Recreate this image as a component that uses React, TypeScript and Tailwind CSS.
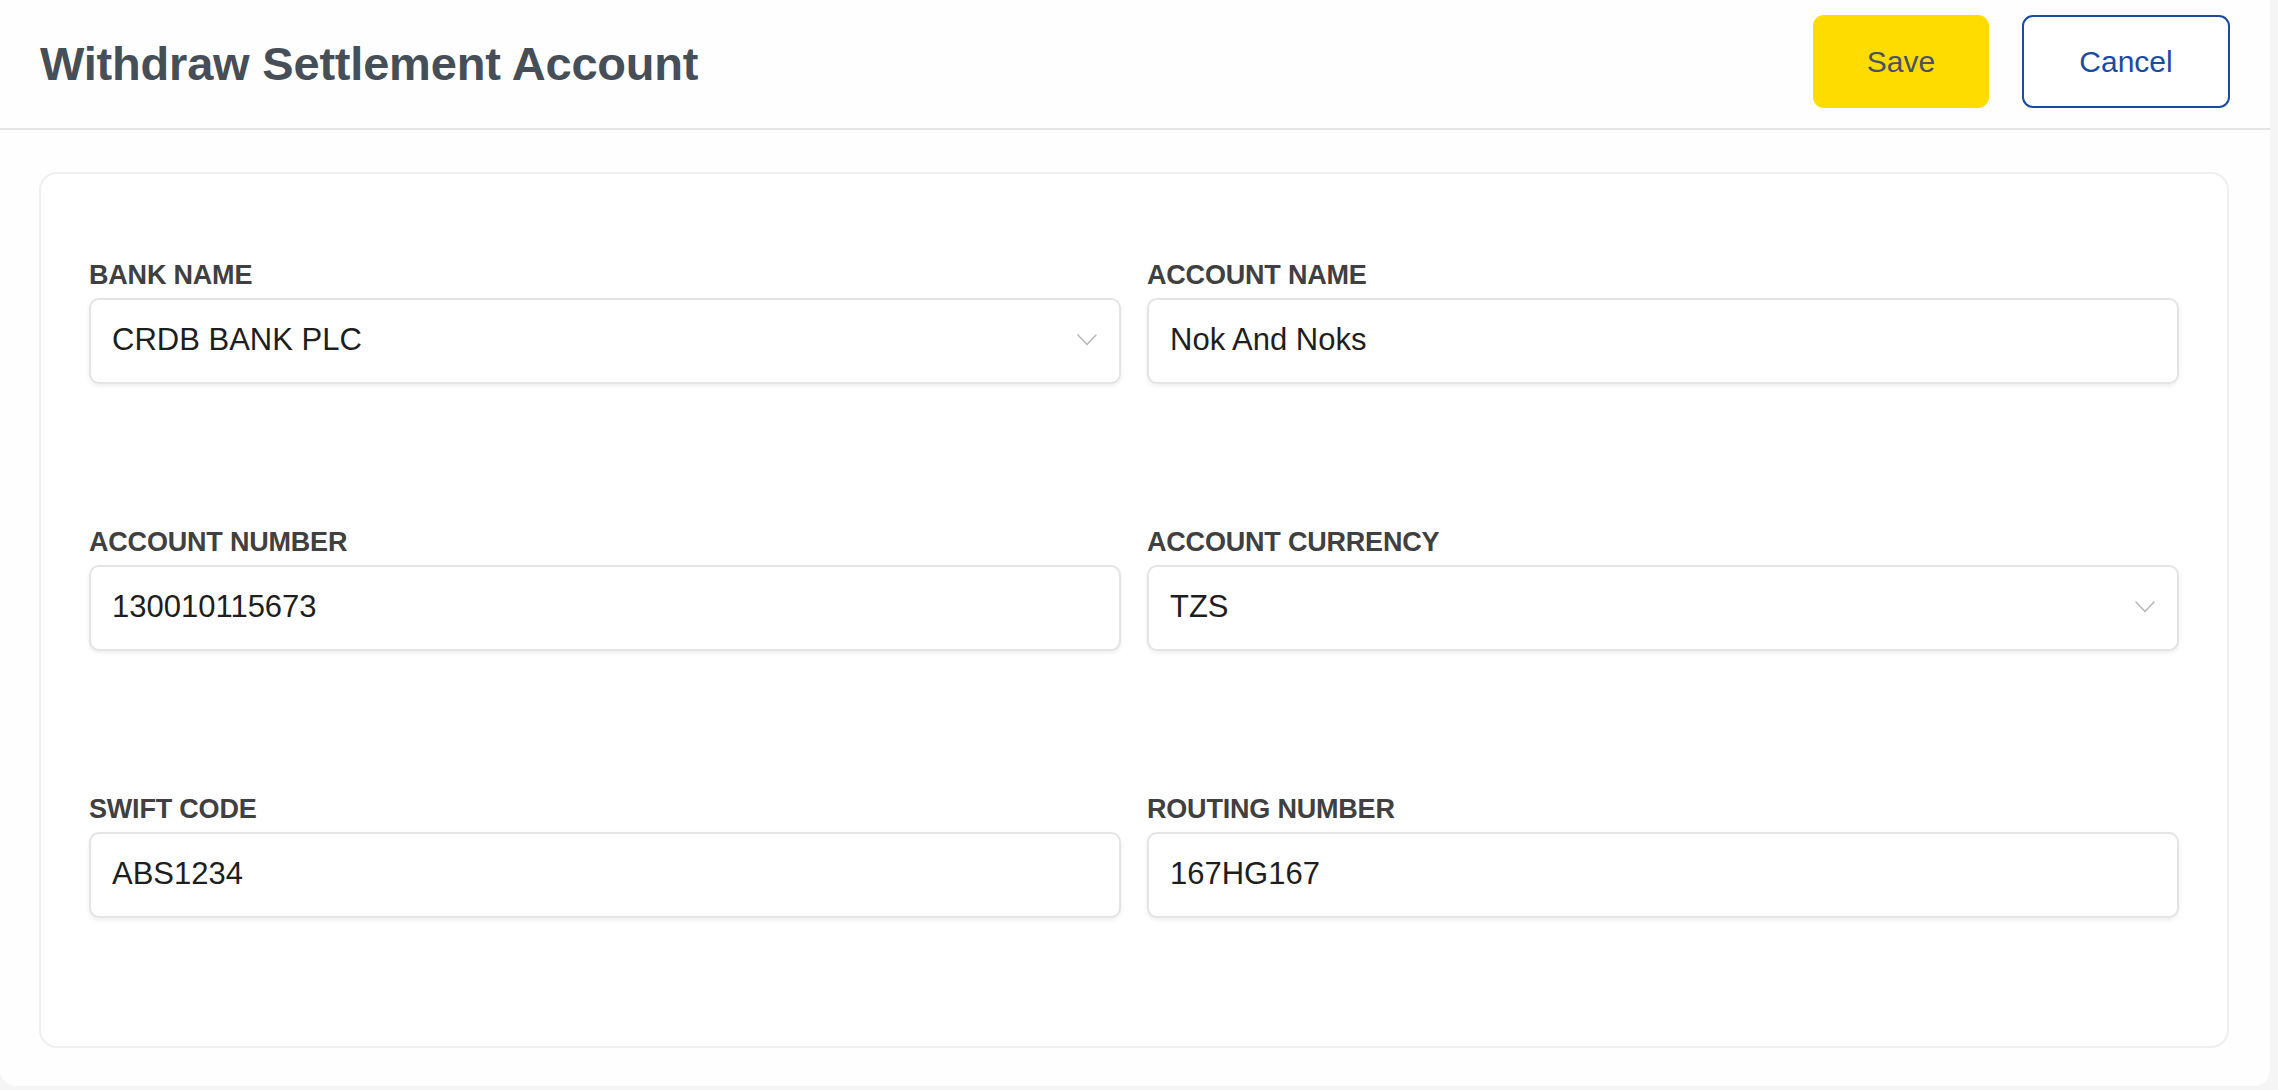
import React from 'react';

const font = { fontFamily: '"Liberation Sans", Arial, sans-serif' };

const Chevron: React.FC = () => (
  <svg width="20" height="12" viewBox="0 0 20 12" fill="none" className="shrink-0">
    <path d="M1 1L10 10.5L19 1" stroke="#b8b8b8" strokeWidth="1.6" strokeLinecap="round" strokeLinejoin="round" />
  </svg>
);

const Field: React.FC<{ label: string; value: string; select?: boolean }> = ({ label, value, select }) => (
  <div className="flex flex-col">
    <label className="text-[27px] leading-[32px] font-bold text-[#404040] tracking-[-0.2px] mb-[7px]">{label}</label>
    <div className="h-[86px] flex items-center justify-between border-2 border-[#e4e4e4] rounded-[10px] bg-white pl-[21px] pr-[22px] pb-[2px] shadow-[0_2px_4px_rgba(0,0,0,0.07)]">
      <span className="text-[31px] text-[#1e1e1e]">{value}</span>
      {select && <Chevron />}
    </div>
  </div>
);

const App: React.FC = () => {
  const fields = [
    { label: 'BANK NAME', value: 'CRDB BANK PLC', select: true },
    { label: 'ACCOUNT NAME', value: 'Nok And Noks' },
    { label: 'ACCOUNT NUMBER', value: '130010115673' },
    { label: 'ACCOUNT CURRENCY', value: 'TZS', select: true },
    { label: 'SWIFT CODE', value: 'ABS1234' },
    { label: 'ROUTING NUMBER', value: '167HG167' },
  ];

  return (
    <div className="w-[2278px] h-[1090px] bg-[#f5f5f5] overflow-hidden" style={font}>
      <div className="w-[2270px] h-[1086px] bg-[#fefefe] rounded-br-[16px] rounded-bl-[16px] flex flex-col">
        {/* Header */}
        <div className="h-[130px] shrink-0 flex items-center justify-between pl-[40px] pr-[40px] border-b-2 border-[#e5e5e5] pb-[6px]">
          <h1 className="text-[47px] font-bold text-[#464e58] tracking-[-0.2px] pt-[6px]">Withdraw Settlement Account</h1>
          <div className="flex items-center gap-[33px]">
            <button className="w-[176px] h-[93px] rounded-[11px] bg-[#ffdc00] text-[30px] text-[#4a5263]">Save</button>
            <button className="w-[208px] h-[93px] rounded-[11px] border-2 border-[#1b4b9f] bg-white text-[30px] text-[#1b4b9f]">Cancel</button>
          </div>
        </div>

        {/* Form card */}
        <div className="pl-[39px] pt-[42px] w-[2229px]">
          <div className="h-[876px] border-2 border-[#efefef] rounded-[18px] bg-white pt-[85px] px-[48px]">
            <div className="grid grid-cols-2 gap-x-[26px] gap-y-[142px]">
              {fields.map((f) => (
                <Field key={f.label} label={f.label} value={f.value} select={f.select} />
              ))}
            </div>
          </div>
        </div>
      </div>
    </div>
  );
};

export default App;
